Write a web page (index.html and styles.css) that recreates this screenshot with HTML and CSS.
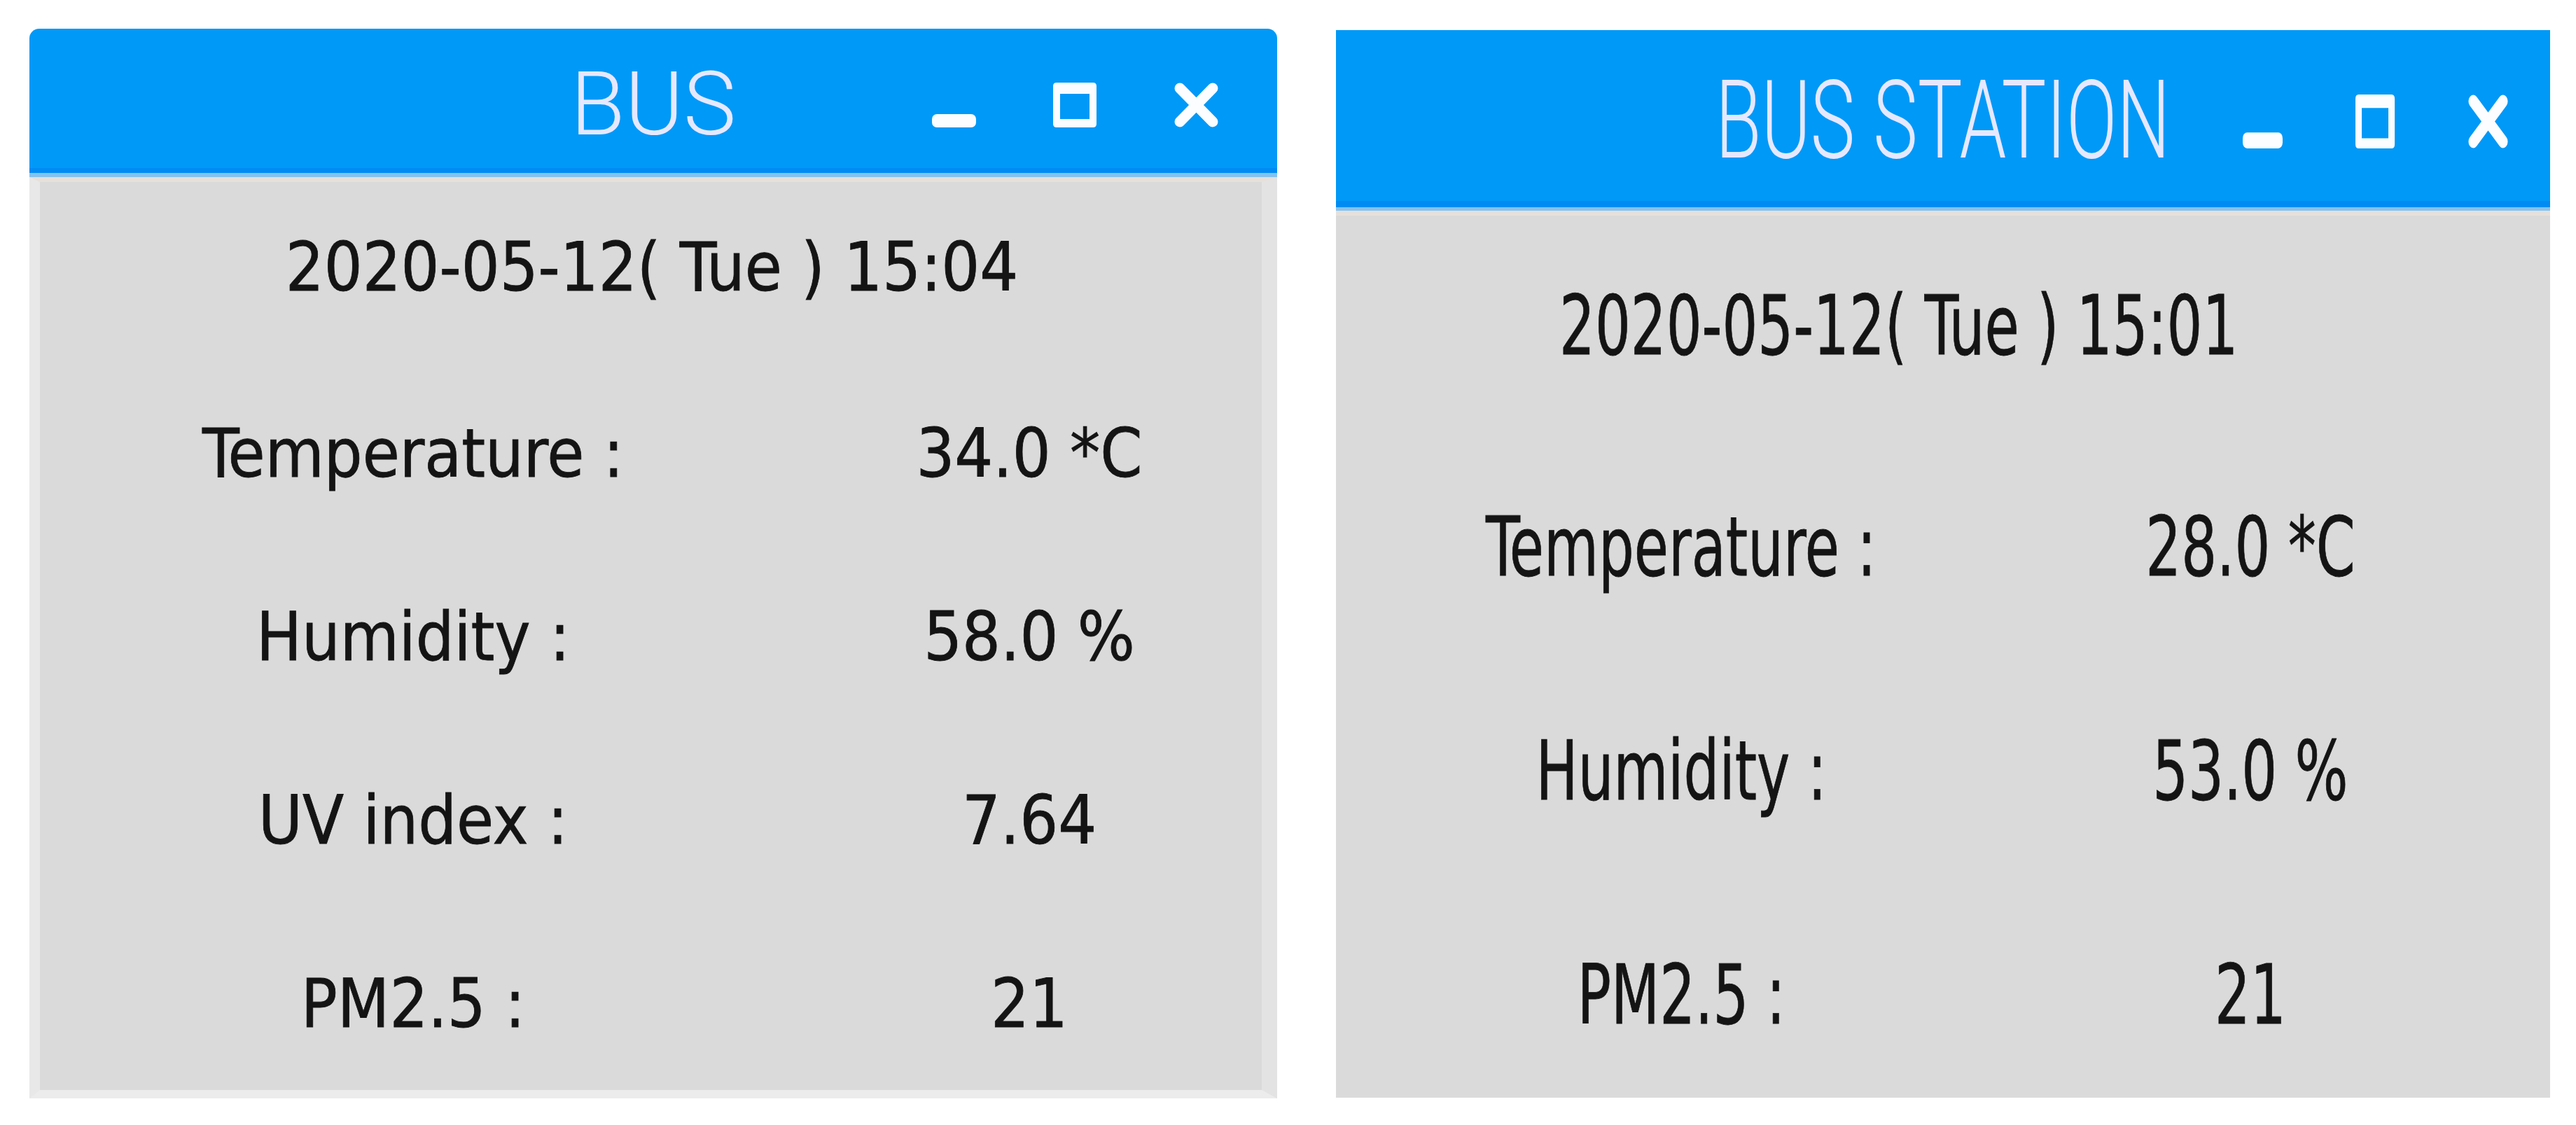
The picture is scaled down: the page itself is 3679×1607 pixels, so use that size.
FILE: index.html
```html
<!DOCTYPE html>
<html lang="en">
<head>
<meta charset="utf-8">
<title>BUS / BUS STATION</title>
<link rel="stylesheet" href="styles.css">
</head>
<body>
<div class="desk">
  <div class="win win-a">
    <div class="titlebar">
      <div class="tb-space"></div>
      <div class="title">BUS</div>
      <div class="controls">
        <svg class="ico" viewBox="0 0 63 64" preserveAspectRatio="none"><rect x="0" y="45" width="63" height="19" rx="7" fill="#fbfdff"/></svg>
        <svg class="ico" viewBox="0 0 63 64" preserveAspectRatio="none"><path fill="#fbfdff" fill-rule="evenodd" d="M5 0H57Q62 0 62 5V59Q62 64 57 64H5Q0 64 0 59V5Q0 0 5 0ZM10 16V52H52V16Z"/></svg>
        <svg class="ico" viewBox="0 0 63 64" preserveAspectRatio="none"><path d="M8 8L55 56M55 8L8 56" stroke="#fbfdff" stroke-width="15" stroke-linecap="round" fill="none"/></svg>
      </div>
    </div>
    <div class="edge"></div>
    <div class="body">
      <div class="date"><span>2020-05-12( Tue ) 15:04</span></div>
      <div class="grid">
        <div class="cell"><span>Temperature :</span></div>
        <div class="cell"><span>34.0 *C</span></div>
        <div class="cell"><span>Humidity :</span></div>
        <div class="cell"><span>58.0 %</span></div>
        <div class="cell"><span>UV index :</span></div>
        <div class="cell"><span>7.64</span></div>
        <div class="cell"><span>PM2.5 :</span></div>
        <div class="cell"><span>21</span></div>
      </div>
    </div>
  </div>

  <div class="win win-b">
    <div class="titlebar">
      <div class="tb-space"></div>
      <div class="title"><span>BUS STATION</span></div>
      <div class="controls">
        <svg class="ico" viewBox="0 0 63 64" preserveAspectRatio="none"><rect x="0" y="45" width="63" height="19" rx="7" fill="#fbfdff"/></svg>
        <svg class="ico" viewBox="0 0 63 64" preserveAspectRatio="none"><path fill="#fbfdff" fill-rule="evenodd" d="M5 0H57Q62 0 62 5V59Q62 64 57 64H5Q0 64 0 59V5Q0 0 5 0ZM10 16V52H52V16Z"/></svg>
        <svg class="ico" viewBox="0 0 63 64" preserveAspectRatio="none"><path d="M8 8L55 56M55 8L8 56" stroke="#fbfdff" stroke-width="15" stroke-linecap="round" fill="none"/></svg>
      </div>
    </div>
    <div class="edge"></div>
    <div class="body">
      <div class="date"><span>2020-05-12( Tue ) 15:01</span></div>
      <div class="grid">
        <div class="cell"><span>Temperature :</span></div>
        <div class="cell"><span>28.0 *C</span></div>
        <div class="cell"><span>Humidity :</span></div>
        <div class="cell"><span>53.0 %</span></div>
        <div class="cell"><span>PM2.5 :</span></div>
        <div class="cell"><span>21</span></div>
      </div>
    </div>
  </div>
</div>
</body>
</html>
```

FILE: styles.css
```css
html, body {
  margin: 0;
  padding: 0;
  background: #ffffff;
}

.desk {
  display: flex;
  align-items: flex-start;
  gap: 84px;
  padding: 41px 0 0 42px;
}

.win {
  display: flex;
  flex-direction: column;
}

.titlebar {
  background: #0099f7;
  display: grid;
  grid-template-columns: minmax(0, 1fr) auto minmax(0, 1fr);
  align-items: center;
}

.title {
  font-family: Roboto, "Liberation Sans", sans-serif;
  font-weight: 300;
  color: #e6e8ff;
  line-height: 1;
  white-space: nowrap;
}

.controls {
  justify-self: end;
  display: flex;
  align-items: flex-start;
}

.ico {
  display: block;
  flex: none;
}

.edge {
  height: 6px;
  background: #86c2ee;
}

.body {
  background: #dadada;
  border-top: 7px solid #e6e0db;
  font-family: "DejaVu Sans Condensed", "DejaVu Sans", sans-serif;
  font-stretch: condensed;
  color: #141414;
  -webkit-text-stroke: 0.8px #141414;
  white-space: nowrap;
  overflow: hidden;
}

.date {
  display: flex;
  align-items: center;
  justify-content: center;
}

.grid {
  display: grid;
}

.cell {
  display: flex;
  align-items: center;
  justify-content: center;
}

/* ---------- window A : BUS ---------- */
.win-a {
  width: 1782px;
}

.win-a .titlebar {
  height: 199px;
  border-bottom: 7px solid #008bf3;
  border-radius: 14px 14px 0 0;
}

.win-a .title {
  font-size: 127px;
  padding-top: 16px;
}

.win-a .controls {
  gap: 110px;
  padding-right: 84px;
  padding-top: 19px;
}

.win-a .ico {
  width: 63px;
  height: 64px;
}

.win-a .body {
  height: 1297px;
  border-left: 15px solid #e8e8e8;
  border-right: 22px solid #e3e3e3;
  border-bottom: 12px solid #ececec;
  font-size: 96px;
}

.win-a .date {
  height: 244px;
  padding-left: 3px;
}

.win-a .grid {
  grid-template-columns: 700px 600px;
  column-gap: 230px;
  padding-left: 183px;
  margin-top: 44px;
  grid-auto-rows: 200px;
  row-gap: 62px;
}

/* ---------- window B : BUS STATION ---------- */
.win-b {
  width: 1734px;
  margin-top: 2px;
}

.win-b .titlebar {
  height: 244px;
  border-bottom: 9px solid #008bf3;
}

.win-b .title {
  font-size: 155px;
  padding-top: 14px;
}

.win-b .title span,
.win-b .body span {
  display: inline-block;
  transform: scaleX(0.76);
  transform-origin: center;
}

.win-b .title span {
  transform: scaleX(0.69);
}

.win-b .controls {
  gap: 104px;
  padding-right: 60px;
  padding-top: 17px;
}

.win-b .ico {
  width: 57px;
  height: 77px;
}

.win-b .edge {
  height: 5px;
}

.win-b .body {
  height: 1260px;
  font-size: 117px;
}

.win-b .date {
  height: 314px;
  padding-right: 126px;
}

.win-b .grid {
  grid-template-columns: 700px 600px;
  column-gap: 163px;
  padding-left: 143px;
  margin-top: 37px;
  grid-auto-rows: 244px;
  row-gap: 76px;
}
```
